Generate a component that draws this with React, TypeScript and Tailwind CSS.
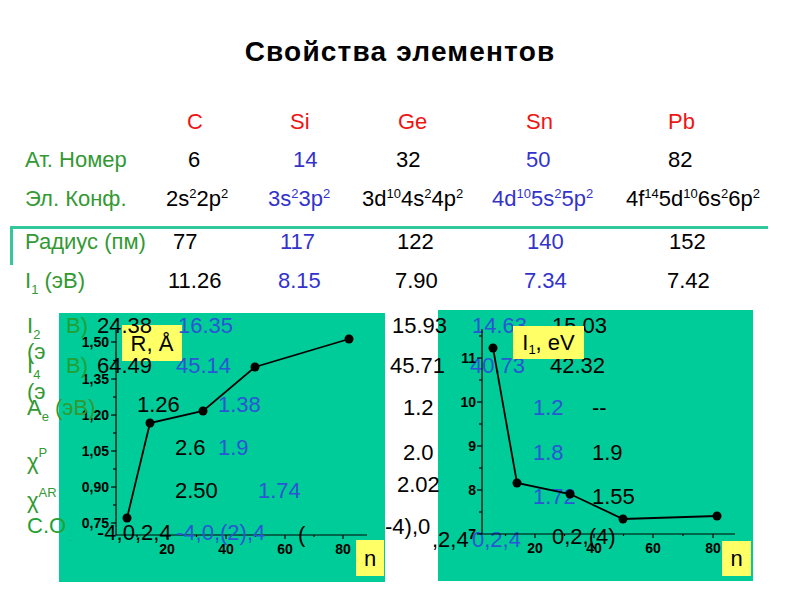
import React from "react";

type Cell = { x: number; y: number; t: React.ReactNode; c?: string };

const G = "text-[#339933]";
const G2 = "text-[#22a033]";
const R = "text-[#ee1515]";
const B = "text-[#3333cc]";
const B2 = "text-[#2a55d4]";
const K = "text-black";

function Row({ top, h, cells, offsetX = 0 }: { top: number; h: number; cells: Cell[]; offsetX?: number }) {
  return (
    <div className="flex items-start shrink-0" style={{ height: h }}>
      {cells.map((cell, i) => {
        const next = cells[i + 1];
        const ml = i === 0 ? cell.x - offsetX : 0;
        const w = next ? next.x - cell.x : undefined;
        return (
          <div
            key={i}
            className={`shrink-0 whitespace-nowrap leading-[24px] ${cell.c ?? K}`}
            style={{ marginLeft: ml || undefined, width: w, paddingTop: Math.max(0, cell.y - top - 12) }}
          >
            {cell.t}
          </div>
        );
      })}
    </div>
  );
}

const S = ({ children }: { children: React.ReactNode }) => (
  <sup className="text-[13px] relative top-[-8px]">{children}</sup>
);
const Sub = ({ children }: { children: React.ReactNode }) => (
  <sub className="text-[13px] relative bottom-[-6px]">{children}</sub>
);

function LeftChart() {
  const majY = [29, 66, 102, 138, 174, 210];
  const labY = ["1,50", "1,35", "1,20", "1,05", "0,90", "0,75"];
  const minY = [47.5, 84, 120, 156, 192];
  const majX = [108, 167, 226, 284];
  const minX = [78, 137.5, 196.5, 255];
  const pts = [
    [68, 205],
    [91, 110],
    [144, 98],
    [196, 54],
    [290, 26],
  ];
  return (
    <div className="absolute left-[59px] top-[313px] w-[326px] h-[269px] bg-[#00cc99] z-0">
      <svg width="326" height="269" className="absolute left-0 top-0">
        <g stroke="#000" strokeWidth="1.2">
          <line x1="57" y1="17" x2="57" y2="222" />
          <line x1="57" y1="222" x2="308" y2="222" />
          {majY.map((y) => (
            <line key={y} x1="52" y1={y} x2="57" y2={y} />
          ))}
          {minY.map((y) => (
            <line key={y} x1="54" y1={y} x2="57" y2={y} />
          ))}
          {majX.map((x) => (
            <line key={x} x1={x} y1="222" x2={x} y2="226" />
          ))}
          {minX.map((x) => (
            <line key={x} x1={x} y1="222" x2={x} y2="224" />
          ))}
        </g>
        <g fontFamily="Liberation Sans, Arial, sans-serif" fontWeight="bold" fontSize="14" fill="#000">
          {majY.map((y, i) => (
            <text key={y} x="50" y={y + 5} textAnchor="end">
              {labY[i]}
            </text>
          ))}
          {majX.map((x, i) => (
            <text key={x} x={x} y="241" textAnchor="middle">
              {["20", "40", "60", "80"][i]}
            </text>
          ))}
        </g>
        <polyline points={pts.map((p) => p.join(",")).join(" ")} fill="none" stroke="#000" strokeWidth="1.8" />
        {pts.map((p, i) => (
          <circle key={i} cx={p[0]} cy={p[1]} r="4.5" fill="#000" />
        ))}
      </svg>
      <div className="absolute left-[63px] top-[12px] w-[60px] h-[36px] bg-[#ffff66] flex items-center justify-center text-[22px] text-black">
        R, Å
      </div>
      <div className="absolute left-[297px] top-[227px] w-[28px] h-[36px] bg-[#ffff66] flex items-center justify-center text-[22px] text-black">
        n
      </div>
    </div>
  );
}

function RightChartBg() {
  return <div className="absolute left-[438px] top-[310px] w-[315px] h-[271px] bg-[#00cc99] z-0" />;
}

function RightChart() {
  const majY = [48, 92, 136, 180, 224];
  const labY = ["11", "10", "9", "8", "7"];
  const minY = [26, 70, 114, 158, 202];
  const majX = [97, 156, 215, 275];
  const minX = [67.5, 126.5, 185.5, 245];
  const pts = [
    [55, 38],
    [79, 173],
    [132, 184],
    [185, 209],
    [279, 206],
  ];
  return (
    <div className="absolute left-[438px] top-[310px] w-[315px] h-[271px] z-20 pointer-events-none">
      <svg width="315" height="271" className="absolute left-0 top-0">
        <g stroke="#000" strokeWidth="1.2">
          <line x1="44" y1="19" x2="44" y2="224" />
          <line x1="44" y1="224" x2="297" y2="224" />
          {majY.map((y) => (
            <line key={y} x1="39" y1={y} x2="44" y2={y} />
          ))}
          {minY.map((y) => (
            <line key={y} x1="41" y1={y} x2="44" y2={y} />
          ))}
          {majX.map((x) => (
            <line key={x} x1={x} y1="224" x2={x} y2="228" />
          ))}
          {minX.map((x) => (
            <line key={x} x1={x} y1="224" x2={x} y2="226" />
          ))}
        </g>
        <g fontFamily="Liberation Sans, Arial, sans-serif" fontWeight="bold" fontSize="14" fill="#000">
          {majY.map((y, i) => (
            <text key={y} x="38" y={y + 5} textAnchor="end">
              {labY[i]}
            </text>
          ))}
          {majX.map((x, i) => (
            <text key={x} x={x} y="243" textAnchor="middle">
              {["20", "40", "60", "80"][i]}
            </text>
          ))}
        </g>
        <polyline points={pts.map((p) => p.join(",")).join(" ")} fill="none" stroke="#000" strokeWidth="1.8" />
        {pts.map((p, i) => (
          <circle key={i} cx={p[0]} cy={p[1]} r="4.5" fill="#000" />
        ))}
      </svg>
      <div className="absolute left-[75px] top-[16px] w-[71px] h-[33px] bg-[#ffff66] flex items-center justify-center text-[22px] text-black">
        <span>
          I<sub className="text-[13px] relative bottom-[-4px]">1</sub>, eV
        </span>
      </div>
      <div className="absolute left-[284px] top-[231px] w-[29px] h-[35px] bg-[#ffff66] flex items-center justify-center text-[22px] text-black">
        n
      </div>
    </div>
  );
}

export default function App() {
  return (
    <div className="relative w-[800px] h-[601px] bg-white overflow-hidden font-['Liberation_Sans',Arial,sans-serif] text-[22px]">
      <LeftChart />
      <RightChartBg />
      <div className="relative z-10 flex flex-col">
        <div className="h-[104px] flex items-center justify-center shrink-0">
          <h1 className="text-[28px] font-bold text-black tracking-[1.2px]">Свойства элементов</h1>
        </div>
        <Row
          top={104}
          h={36}
          cells={[
            { x: 187, y: 122, t: "C", c: R },
            { x: 290, y: 122, t: "Si", c: R },
            { x: 398, y: 122, t: "Ge", c: R },
            { x: 526, y: 122, t: "Sn", c: R },
            { x: 668, y: 122, t: "Pb", c: R },
          ]}
        />
        <Row
          top={140}
          h={40}
          cells={[
            { x: 25, y: 160, t: "Ат. Номер", c: G },
            { x: 188, y: 160, t: "6" },
            { x: 293, y: 160, t: "14", c: B },
            { x: 396, y: 160, t: "32" },
            { x: 526, y: 160, t: "50", c: B },
            { x: 668, y: 160, t: "82" },
          ]}
        />
        <Row
          top={180}
          h={38}
          cells={[
            { x: 25, y: 199, t: "Эл. Конф.", c: G },
            { x: 166, y: 199, t: <>2s<S>2</S>2p<S>2</S></> },
            { x: 268, y: 199, t: <>3s<S>2</S>3p<S>2</S></>, c: B },
            { x: 362, y: 199, t: <>3d<S>10</S>4s<S>2</S>4p<S>2</S></> },
            { x: 492, y: 199, t: <>4d<S>10</S>5s<S>2</S>5p<S>2</S></>, c: B },
            { x: 626, y: 199, t: <>4f<S>14</S>5d<S>10</S>6s<S>2</S>6p<S>2</S></> },
          ]}
        />
        <div className="mt-[8px] ml-[10px] w-[758px] h-[39px] border-t-[3px] border-l-[3px] border-[#33c89c] shrink-0">
          <Row
            top={229}
            h={36}
            offsetX={13}
            cells={[
              { x: 25, y: 242, t: "Радиус (пм)", c: G },
              { x: 173, y: 242, t: "77" },
              { x: 280, y: 242, t: "117", c: B },
              { x: 397, y: 242, t: "122" },
              { x: 527, y: 242, t: "140", c: B },
              { x: 669, y: 242, t: "152" },
            ]}
          />
        </div>
        <Row
          top={265}
          h={32}
          cells={[
            { x: 25, y: 281, t: <>I<Sub>1</Sub> (эВ)</>, c: G },
            { x: 168, y: 281, t: "11.26" },
            { x: 278, y: 281, t: "8.15", c: B },
            { x: 395, y: 281, t: "7.90" },
            { x: 524, y: 281, t: "7.34", c: B },
            { x: 667, y: 281, t: "7.42" },
          ]}
        />
        <Row
          top={297}
          h={49}
          cells={[
            {
              x: 27,
              y: 326,
              t: (
                <>
                  <div>
                    I<Sub>2</Sub>
                  </div>
                  <div className="mt-[2px]">(э</div>
                </>
              ),
              c: G,
            },
            { x: 66, y: 326, t: "В)", c: G2 },
            { x: 97, y: 326, t: "24.38" },
            { x: 178, y: 326, t: "16.35", c: B2 },
            { x: 392, y: 326, t: "15.93" },
            { x: 472, y: 326, t: "14.63", c: B2 },
            { x: 552, y: 326, t: "15.03" },
          ]}
        />
        <Row
          top={346}
          h={42}
          cells={[
            {
              x: 27,
              y: 366,
              t: (
                <>
                  <div>
                    I<Sub>4</Sub>
                  </div>
                  <div className="mt-[2px]">(э</div>
                </>
              ),
              c: G,
            },
            { x: 66, y: 366, t: "В)", c: G2 },
            { x: 97, y: 366, t: "64.49" },
            { x: 176, y: 366, t: "45.14", c: B2 },
            { x: 390, y: 366, t: "45.71" },
            { x: 470, y: 366, t: "40.73", c: B2 },
            { x: 550, y: 366, t: "42.32" },
          ]}
        />
        <Row
          top={388}
          h={43}
          cells={[
            { x: 27, y: 408, t: <>A<Sub>e</Sub> (эВ)</>, c: G },
            { x: 137, y: 405, t: "1.26" },
            { x: 218, y: 405, t: "1.38", c: B2 },
            { x: 403, y: 408, t: "1.2" },
            { x: 533, y: 408, t: "1.2", c: B2 },
            { x: 592, y: 408, t: "--" },
          ]}
        />
        <Row
          top={431}
          h={40}
          cells={[
            { x: 27, y: 462, t: <>χ<sup className="text-[13px] relative top-[-12px]">P</sup></>, c: G },
            { x: 175, y: 448, t: "2.6" },
            { x: 218, y: 448, t: "1.9", c: B2 },
            { x: 403, y: 453, t: "2.0" },
            { x: 533, y: 453, t: "1.8", c: B2 },
            { x: 592, y: 453, t: "1.9" },
          ]}
        />
        <Row
          top={471}
          h={40}
          cells={[
            { x: 27, y: 501, t: <>χ<sup className="text-[13px] relative top-[-11px]">AR</sup></>, c: G },
            { x: 175, y: 491, t: "2.50" },
            { x: 258, y: 491, t: "1.74", c: B2 },
            { x: 397, y: 485, t: "2.02" },
            { x: 533, y: 497, t: "1.72", c: B2 },
            { x: 592, y: 497, t: "1.55" },
          ]}
        />
        <Row
          top={511}
          h={40}
          cells={[
            { x: 27, y: 526, t: <>C.O<span className="text-[9px] ml-[3px] relative top-[8px]">.</span></>, c: G2 },
            { x: 97, y: 533, t: "-4,0,2,4" },
            { x: 176, y: 533, t: "-4,0,(2),4", c: B2 },
            { x: 298, y: 535, t: "(" },
            { x: 385, y: 527, t: "-4),0" },
            { x: 432, y: 540, t: ",2,4" },
            { x: 472, y: 540, t: "0,2,4", c: B2 },
            { x: 552, y: 537, t: "0,2,(4)" },
          ]}
        />
      </div>
      <RightChart />
    </div>
  );
}
